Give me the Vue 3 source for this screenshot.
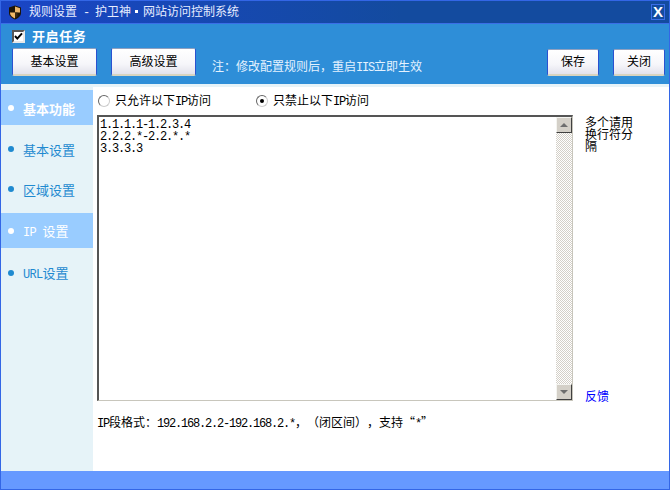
<script setup>
const navItems = [
  { id: 'fn', parts: [{ t: '基本功能' }], active: true, strong: true },
  { id: 'basic', parts: [{ t: '基本设置' }] },
  { id: 'area', parts: [{ t: '区域设置' }] },
  { id: 'ip', parts: [{ t: 'IP', lat: true }, { t: ' ', lat: true }, { t: '设置' }], active: true },
  { id: 'url', parts: [{ t: 'URL', lat: true }, { t: '设置' }] }
]
const ipRules = ['1.1.1.1-1.2.3.4', '2.2.2.*-2.2.*.*', '3.3.3.3']
</script>

<template>
  <div class="win">
    <header class="title">
      <svg class="shield" width="14" height="15" viewBox="0 0 14 15">
        <path d="M7 .5 13 2.5V8C13 11 10 13.5 7 14.5 4 13.5 1 11 1 8V2.5Z" fill="#1c1408" />
        <path d="M7 1.6 12 3.2V7.5H7Z" fill="#e8b46a" />
        <path d="M7 7.5V13.4C4.5 12.5 2 10.5 2 8V7.5Z" fill="#f0b868" />
        <path d="M7 7.5H9.5V11.5L7 13Z" fill="#3a2a12" />
      </svg>
      <span class="title-text">规则设置<span class="lat"> - </span>护卫神<span class="sep"></span>网站访问控制系统</span>
      <span class="close-x">X</span>
    </header>

    <section class="toolbar">
      <div class="task">
        <span class="check">
          <svg width="9" height="9" viewBox="0 0 9 9"><path d="M1 4 3.3 6.6 8 1.4" fill="none" stroke="#000" stroke-width="2" /></svg>
        </span>
        <span class="task-label">开启任务</span>
      </div>
      <div class="actions">
        <button class="btn wide">基本设置</button>
        <button class="btn wide">高级设置</button>
        <span class="note">注：修改配置规则后，重启<span class="lat">IIS</span>立即生效</span>
        <button class="btn small push">保存</button>
        <button class="btn small">关闭</button>
      </div>
    </section>

    <div class="strip"></div>

    <div class="body">
      <nav class="side">
        <div
          v-for="item in navItems"
          :key="item.id"
          class="nav-item"
          :class="['nav-' + item.id, { active: item.active, strong: item.strong }]"
        >
          <i class="dot"></i>
          <span class="nav-text"><span v-for="(p, i) in item.parts" :key="i" :class="{ 'nav-lat': p.lat }">{{ p.t }}</span></span>
        </div>
      </nav>

      <main class="content">
        <div class="radios">
          <label class="radio r1"><i class="rad"></i><span>只允许以下<span class="lat">IP</span>访问</span></label>
          <label class="radio"><i class="rad on"></i><span>只禁止以下<span class="lat">IP</span>访问</span></label>
        </div>

        <div class="edit-row">
          <div class="field">
            <div class="rules">
              <div v-for="r in ipRules" :key="r" class="rule">{{ r }}</div>
            </div>
            <div class="scroll">
              <span class="sb-btn"><i class="up"></i></span>
              <span class="track"></span>
              <span class="sb-btn"><i class="down"></i></span>
            </div>
          </div>
          <aside class="hint">
            <span class="hint-text">多个请用换行符分隔</span>
            <a class="feedback">反馈</a>
          </aside>
        </div>

        <p class="format"><span class="lat">IP</span>段格式：<span class="lat">192.168.2.2-192.168.2.*</span>，（闭区间），支持“<span class="lat">*</span>”</p>
      </main>
    </div>

    <footer class="foot"></footer>
  </div>
</template>

<style scoped>
.win {
  width: 670px;
  height: 490px;
  box-sizing: border-box;
  border: 1px solid #3366e6;
  display: flex;
  flex-direction: column;
  font: 12px/12px "Noto Sans CJK SC", sans-serif;
  text-spacing-trim: space-all;
  color: #000;
  background: #fff;
  overflow: hidden;
}
.lat {
  font-family: "Liberation Mono", monospace;
  font-size: 12px;
  letter-spacing: -1.2px;
  white-space: pre;
}
.title {
  height: 22px;
  flex: none;
  display: flex;
  align-items: center;
  padding: 0 4px 0 7px;
  background: linear-gradient(90deg, #1a45c6, #134b9f 60%);
  border-bottom: 1px solid #3a6ee8;
}
.shield { flex: none; }
.title-text {
  margin-left: 7px;
  color: #e6ecff;
  white-space: nowrap;
}
.sep {
  display: inline-block;
  width: 3px;
  height: 3px;
  margin: 0 5px 2px 4px;
  background: #fff;
  vertical-align: middle;
}
.close-x {
  margin-left: auto;
  width: 12px;
  height: 14px;
  border: 1px solid #3a6ee8;
  color: #fff;
  font: bold 15px/14px "Liberation Sans", sans-serif;
  text-align: center;
}
.toolbar {
  height: 60px;
  flex: none;
  box-sizing: border-box;
  background: #2e8ed8;
  padding: 0 4px 0 11px;
}
.task {
  height: 24px;
  display: flex;
  align-items: center;
  box-sizing: border-box;
}
.check {
  width: 9px;
  height: 9px;
  background: #fff;
  border: 2px solid;
  border-color: #555 #e8e8e8 #e8e8e8 #555;
  display: flex;
  align-items: center;
  justify-content: center;
}
.task-label {
  margin-left: 7px;
  color: #fff;
  font-weight: bold;
  font-size: 13px;
  letter-spacing: 0.6px;
}
.actions {
  display: flex;
  align-items: flex-end;
  height: 28px;
}
.btn {
  box-sizing: border-box;
  padding: 0 0 2px;
  font: 12px/12px "Noto Sans CJK SC", sans-serif;
  color: #000;
  border: 1px solid;
  border-color: #8fa0c0 #2a52d0 #d8d4c0 #2a52d0;
  border-bottom-width: 2px;
  border-radius: 2px;
  background: linear-gradient(#fff, #f6f6fa 60%, #e2e2ec);
}
.wide {
  width: 85px;
  height: 28px;
  margin-right: 14px;
}
.small {
  width: 52px;
  height: 27px;
}
.push { margin-left: auto; margin-right: 14px; }
.note {
  margin: 0 0 2px 2px;
  color: #e4f2ff;
  white-space: nowrap;
}
.strip {
  height: 3px;
  flex: none;
  background: #e6f3f8;
}
.body {
  flex: 1;
  min-height: 0;
  display: flex;
}
.side {
  width: 92px;
  flex: none;
  background: #e6f3f8;
  padding-top: 3px;
  box-sizing: border-box;
}
.nav-item {
  height: 35px;
  display: flex;
  align-items: center;
  padding-left: 7px;
  font-size: 13px;
  color: #1f8ad0;
  white-space: pre;
}
.nav-text { padding-top: 2px; }
.nav-basic { margin-top: 6px; }
.nav-area { margin-top: 5px; }
.nav-ip { margin-top: 7px; }
.nav-url { margin-top: 7px; }
.nav-item.active {
  background: #99ccff;
  color: #fff;
}
.nav-item.strong { font-weight: bold; }
.nav-lat {
  font-family: "Liberation Mono", monospace;
  font-size: 12px;
  letter-spacing: -0.7px;
}
.dot {
  width: 6px;
  height: 6px;
  border-radius: 50%;
  background: #1f8ad0;
  margin-right: 9px;
  flex: none;
}
.active .dot { background: #fff; }
.content {
  flex: 1;
  min-width: 0;
  padding: 0 4px;
}
.radios {
  height: 28px;
  display: flex;
  align-items: center;
  box-sizing: border-box;
}
.radio {
  display: flex;
  align-items: center;
}
.r1 { width: 158px; }
.rad {
  width: 10px;
  height: 10px;
  border: 1px solid;
  border-color: #666 #ccc #ccc #666;
  border-radius: 50%;
  margin: 0 5px 0 1px;
  background: #fff;
  position: relative;
}
.rad.on::after {
  content: "";
  position: absolute;
  left: 3px;
  top: 3px;
  width: 4px;
  height: 4px;
  border-radius: 50%;
  background: #000;
}
.edit-row {
  display: flex;
  height: 286px;
}
.field {
  width: 476px;
  flex: none;
  box-sizing: border-box;
  border: 1px solid;
  border-color: #555 #c8c6bc #c8c6bc #555;
  border-top-width: 2px;
  border-left-width: 2px;
  display: flex;
}
.rules {
  flex: 1;
  padding: 2px 1px 0;
}
.rule {
  font-family: "Liberation Mono", monospace;
  font-size: 12px;
  letter-spacing: -1.2px;
  line-height: 12px;
}
.scroll {
  width: 16px;
  flex: none;
  display: flex;
  flex-direction: column;
}
.track {
  flex: 1;
  background: repeating-conic-gradient(#d4d0c8 0 25%, #fff 0 50%) 0 0 / 2px 2px;
}
.sb-btn {
  height: 16px;
  box-sizing: border-box;
  background: #d4d0c8;
  border: 1px solid;
  border-color: #f4f4f0 #404040 #404040 #f4f4f0;
  display: flex;
  align-items: center;
  justify-content: center;
}
.up, .down {
  width: 0;
  height: 0;
  border-left: 4px solid transparent;
  border-right: 4px solid transparent;
}
.up { border-bottom: 4px solid #6e6e6e; }
.down { border-top: 4px solid #6e6e6e; }
.hint {
  width: 48px;
  margin: 0 0 -1px 12px;
  padding-top: 1px;
  display: flex;
  flex-direction: column;
  justify-content: space-between;
}
.feedback { color: #0000ff; }
.format {
  margin: 15px 0 0;
  line-height: 12px;
  white-space: nowrap;
}
.foot {
  height: 18px;
  flex: none;
  background: #6699ff;
}
</style>

<style>
html, body { margin: 0; background: #fff; }
</style>
